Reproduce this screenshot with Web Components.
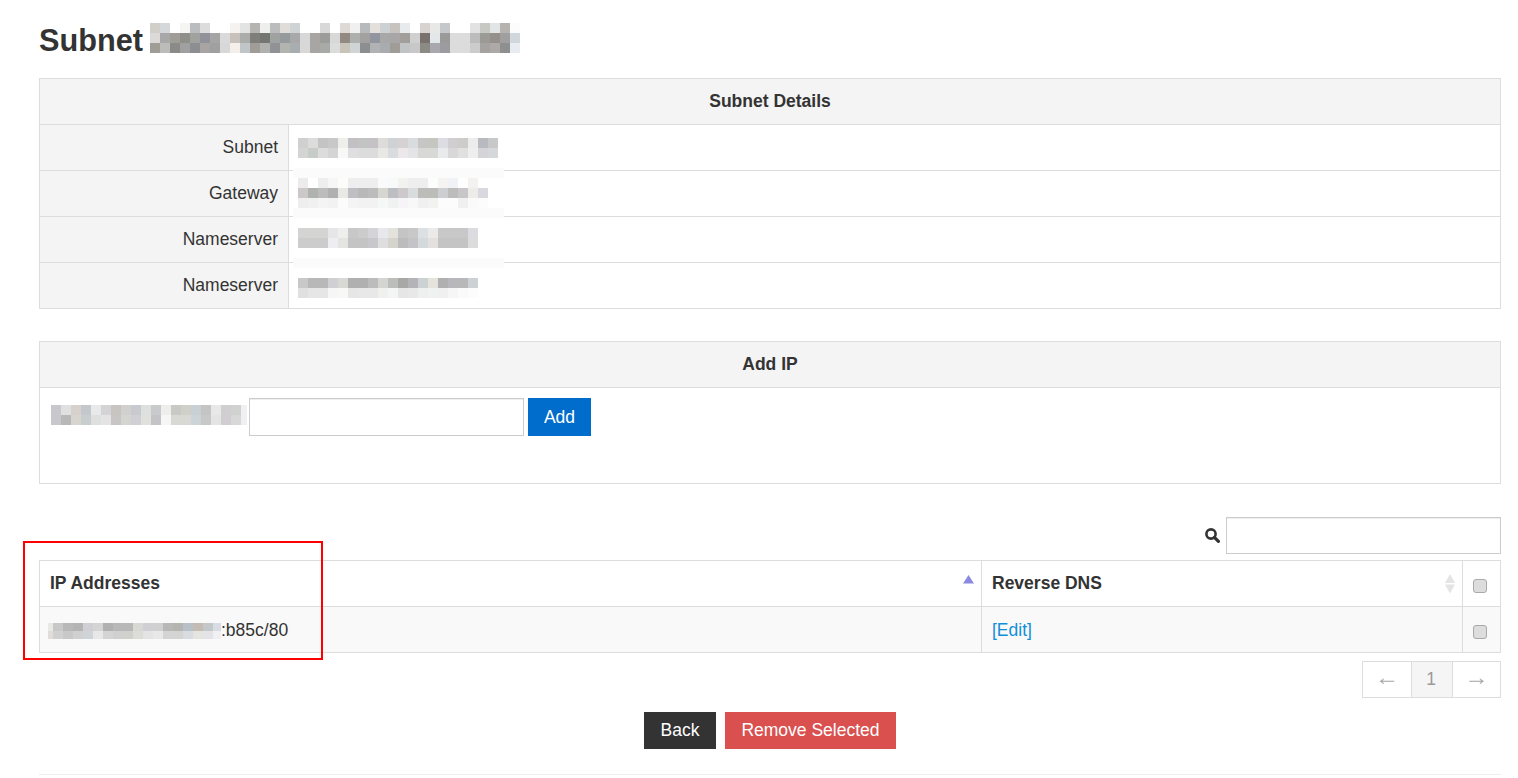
<!DOCTYPE html>
<html lang="en"><head><meta charset="utf-8"><title>Subnet</title>
<style>
html,body{margin:0;padding:0;background:#fff;overflow:hidden;height:778px}
body{font-family:"Liberation Sans",Arial,sans-serif;font-size:17.5px;color:#333}
</style></head><body>
<subnet-page>
  <page-title>Subnet <pixel-mosaic slot="mask" w="10" h="10" rows="
d2cec9 d4d8db ffffff f5f5f3 bbbcbd dcdcdc ffffff ffffff f6f2ef e2e4e4 b5b4b2 eeeeec bbbcbd e0ddd8 cfd3d6 ffffff ffffff d8d8d8 ffffff ded9d5 f0f0f0 b8b9ba e3dfdb ccd1d4 c8c3bf e8ebed ffffff d8d3d0 e8e8e6 c4c8ca ffffff ffffff e2e2e2 c8c8c2 e2e4e6 b5b3b0 fcfcfc|
dcdad8 a8a8a8 a09c98 8f8f8a a0a2a0 8f9298 a5a5a5 dadada c8c0ba aaadaa 807e7a 747672 a0a2a2 959a9d a8a8a8 d8d8d8 a8a5a2 9c9c9a d8d8d8 928a82 aeb0b0 a3a0a0 9095a0 a8a8a8 a8a6a6 a29e9c d0d0d0 7a706c e2e8ea 9a9a98 dcdcdc dcdcdc bcbcbc 9c9a94 96908c a09e9e d0d8de|
a09c96 bcbcba 8a8a88 a0a0a0 8c8e92 a8a4a4 a0a0a0 d8d8d8 f5efec c0c6c8 a09c98 b0b0ae 909296 b2b4b0 a8aeb0 d8d8d8 a8a6a4 a8aaa8 dcdcdc c8c4ba d0d4d4 8c8e90 b0b2b4 a8acae a09c98 c0c4c4 c8c8c8 8c8a84 a8a8ae 9c9ca0 dcdcdc dcdcdc cccccc a6a2a0 aea8a8 8e9090 e8ecf0"></pixel-mosaic></page-title>

  <detail-panel heading="Subnet Details">
    <detail-row label="Subnet"><pixel-mosaic style="margin-top:13px" w="10" h="10" rows="
d0d0d0 dcdcdc c4c4c4 c8c8c8 eeeeea c2c0c2 c2c4c4 c4c2c4 dedcda ced2d4 d6d2d4 d8dcde c6c6c4 c6c6c0 dcdce2 d0ced0 ccccca ececec b8bac0 c8c8c8|
d4d4d4 c8ccc8 dcdcdc d4d4d4 f8f8f6 e0dee0 dcdcdc dcdcdc e8e8e4 d8dcde ece8ea e4e4e6 d8d8d6 d8d8d6 e8eaec d8d8d8 e0e0e0 eeeeee d4d4d8 d4d8da"></pixel-mosaic></detail-row>
    <detail-row label="Gateway"><mask-band style="top:-3px"></mask-band><mask-band style="top:37px"></mask-band><pixel-mosaic style="margin-top:7px" w="10" h="10" rows="
ececec ffffff eeeeee f6f6f6 fcfcfa eeeeee eeeeee eeeeee f8fafc f8fafa f2f2ee eeeeee eeeeee fcfefe f6f4f2 f0f2f6 fefefe f4f2f0 ffffff|
ccc8c8 b0b2b0 bcbcbc b0b0b0 e8e8e4 c0bec2 b8b8b8 bcbcbc d8d6d0 bcbec2 ccc8cc d8dcdc bcbcb8 bcbcb8 ccced2 bcbcbc c8c6c8 eeece8 d8d8de|
eeeeee f0f0f0 f4f4f4 f2f2f2 fcfcfc f4f4f4 f2f2f2 f2f2f2 f6f8f8 f0f2f2 f6f4f6 f8f8f8 f0f0f0 f2f2f0 fcfcfc fcfcfc f0f0f0 fafafa fcfcfc"></pixel-mosaic></detail-row>
    <detail-row label="Nameserver"><mask-band style="top:41px"></mask-band><pixel-mosaic style="margin-top:11px" w="10" h="10" rows="
d4d4d4 d4d4d2 d4d4d2 e6e6e8 eeeeec c8c8c8 cccccc d4d4d8 e6e8ec e4e2dc c4c4c4 c8c8c8 dce0e2 eceae8 c8c8c8 c8c8c8 c8c8c8 dcdce0|
cccccc cccccc cccccc eeeef2 e4e4e2 c4c4c4 c4c4c4 c8c8cc dedede d4d4cc bcbcbc c4c4c8 d4dadc e4e0e0 c4c4c4 c4c4c4 c4c4c4 dcdcdc"></pixel-mosaic></detail-row>
    <detail-row label="Nameserver"><pixel-mosaic style="margin-top:15px" w="10" h="10" rows="
c8c8c8 b8b8b8 b8b8b8 d0d0d4 d8d8d4 b0b0b0 b0b0b0 bcbcbc d4d4d0 bcbebc a8a8a6 b4b4b8 ccd2d4 e6e2dc b0b0b0 b8b8bc b8b8b8 ccd2d4|
e0e0e0 e6e6e6 e6e6e6 f6f6f6 f8f8f6 e6e6e6 e8e8e8 e8e8e8 f0f0ee f4f6f6 e6e6e6 e8e8e8 eef0f0 f0f2f2 f0f0f0 f6f6f6 fafafa fcfcfc"></pixel-mosaic></detail-row>
  </detail-panel>

  <detail-panel heading="Add IP" style="margin-top:32px">
    <add-ip-form><pixel-mosaic slot="mask" cols="repeat(19,10px) 6px" w="10" h="10" rows="
c8c8cc e0e0e0 d8d0cc c4c8cc e8eaea d4d4d6 c8c4c0 d0d0ce c8cad0 dce0de c8cacc eeeeec c8c8c4 d0d0c8 c8d0d4 c4c4c4 e8e8e8 d0ced0 d0d2d0 f0f0f2|
c8c8cc b8b8b8 d8d4d0 c8cece dee0e0 e4e4e4 c8c6c4 d4d4d0 d0d0d4 e0e0dc c4c4c8 f6f6f6 d8d8d4 d8d8d4 ccd4d8 c8c8c8 e4e4e4 d0ced0 d8d8d8 f0f0f2"></pixel-mosaic></add-ip-form>
  </detail-panel>

  <table-search></table-search>

  <ip-table>
    <ip-row head>
      <ip-cell sort="asc" head>IP Addresses</ip-cell>
      <ip-cell sort="both" head>Reverse DNS</ip-cell>
      <ip-cell check></ip-cell>
    </ip-row>
    <ip-row odd>
      <ip-cell><pixel-mosaic cols="5px repeat(16,10px) 8px" w="10" h="8" style="margin:16px 0 0 -2px" rows="
e8e8e4 c8c8c8 b8b8b8 b4b4b4 d0d0d4 d4d4d4 b0b0b0 b8b8b8 b8b8b8 d8d8d4 d0d0d4 d0d0d0 b8b8b8 b4b4b0 b8c0c8 c4bcb4 c4c8c8 d8dce4|
e0dcd8 d0d0d0 c8c8c8 d0d0d0 d0d4d8 e8e8e8 d4d4d4 d0d0d0 d0d0cc dcdcd8 e4e4e4 e8e8e8 d4d4d4 d4d4d4 d8dce0 e4e4e0 e4e4e8 f0f0f4"></pixel-mosaic>:b85c/80</ip-cell>
      <ip-cell><a href="#" style="color:#0f8fd8;text-decoration:none">[Edit]</a></ip-cell>
      <ip-cell check></ip-cell>
    </ip-row>
  </ip-table>

  <page-nav></page-nav>

  <action-bar>
    <action-button style="--bg:#333;--w:72px">Back</action-button>
    <action-button style="--bg:#d9504e;--w:171px">Remove Selected</action-button>
  </action-bar>

  <red-callout></red-callout>
</subnet-page>

<script>
const def=(name,css,html)=>{
  customElements.define(name,class extends HTMLElement{
    constructor(){super();const r=this.attachShadow({mode:'open'});
      r.innerHTML=`<style>${css}</style>${typeof html==='function'?html(this):html}`;}
  });
};
def('subnet-page',`:host{display:block;position:relative;width:1462px;height:778px;padding-left:39px}
  .hr{border-top:1px solid #eee;margin-top:25px}`,`<slot></slot><div class="hr"></div>`);
def('page-title',`:host{display:flex;align-items:flex-start;height:78px;box-sizing:border-box;padding-top:24px;font-size:30.7px;font-weight:bold;line-height:34px;color:#333}
  slot[name=mask]{display:block;margin:-1px 0 0 7px}`,`<slot></slot><slot name="mask"></slot>`);
customElements.define('pixel-mosaic',class extends HTMLElement{
  constructor(){super();this.attachShadow({mode:'open'});}
  connectedCallback(){
    const w=+this.getAttribute('w')||10,h=+this.getAttribute('h')||10;
    const rows=this.getAttribute('rows').trim().split('|').map(r=>r.trim().split(/\s+/));
    const cols=this.getAttribute('cols')||`repeat(${rows[0].length},${w}px)`;
    this.shadowRoot.innerHTML=`<style>:host{display:inline-grid;grid-template-columns:${cols};grid-auto-rows:${h}px;flex:none;vertical-align:top}</style>`+
      rows.flat().map(c=>`<div style="background:#${c}"></div>`).join('');
  }
});
def('detail-panel',`:host{display:block;border:1px solid #ddd}
  .h{height:45px;background:#f4f4f4;display:flex;align-items:center;justify-content:center;font-weight:bold}`,
  el=>`<div class="h">${el.getAttribute('heading')}</div><slot></slot>`);
def('detail-row',`:host{display:flex;border-top:1px solid #ddd;height:45px}
  .l{width:238px;padding-right:10px;background:#f4f4f4;border-right:1px solid #ddd;text-align:right;line-height:45px}
  .v{flex:1;position:relative;padding-left:9px;display:flex;align-items:flex-start}`,
  el=>`<div class="l">${el.getAttribute('label')}</div><div class="v"><slot></slot></div>`);
def('mask-band',`:host{display:block;position:absolute;left:4px;width:211px;height:10px;background:#fbfbfb;z-index:1}`,``);
def('add-ip-form',`:host{display:flex;align-items:flex-start;border-top:1px solid #ddd;height:96px;padding:10px 0 0 11px;box-sizing:border-box}
  slot{display:block;margin-top:7px}
  input{width:275px;height:38px;box-sizing:border-box;border:1px solid #ccc;box-shadow:inset 0 1px 1px rgba(0,0,0,.075);font:inherit;margin:0 0 0 2px;padding:0 8px;outline:none}
  button{height:38px;width:63px;margin-left:4px;background:#006dcc;color:#fff;border:0;font:inherit;padding:0}`,
  `<slot name="mask"></slot><input type="text" aria-label="IP"><button>Add</button>`);
def('table-search',`:host{display:flex;justify-content:flex-end;align-items:center;margin-top:33px;height:37px;gap:6px}
  input{width:275px;height:37px;box-sizing:border-box;border:1px solid #ccc;box-shadow:inset 0 1px 1px rgba(0,0,0,.075);outline:none;padding:0 8px}
  svg{display:block}`,
  `<svg width="15" height="15" viewBox="0 0 15 15"><circle cx="6" cy="6" r="4.6" fill="none" stroke="#333" stroke-width="2.6"/><path d="M9.4 9.4 13.4 13.4" stroke="#333" stroke-width="3.2" stroke-linecap="round"/></svg><input type="text" aria-label="Search">`);
def('ip-table',`:host{display:block;border:1px solid #ddd;margin-top:6px}`,`<slot></slot>`);
def('ip-row',`:host{display:grid;grid-template-columns:941px 481px 1fr;height:45px;--lh:44px}
  :host([odd]){background:#f9f9f9;border-top:1px solid #ddd;--lh:46px}`,`<slot></slot>`);
def('ip-cell',`:host{display:block;position:relative;padding:0 10px;line-height:var(--lh);white-space:nowrap;box-sizing:border-box;height:100%}
  :host(:not(:first-child)){border-left:1px solid #ddd}
  :host([head]){font-weight:bold}
  svg{position:absolute;top:13px}
  .cb{position:absolute;left:10px;top:18px;width:14px;height:14px;box-sizing:border-box;background:#ddd;border:1px solid #aaa;border-radius:3px;margin:0;appearance:none;-webkit-appearance:none}`,
  el=>{
    const s=el.getAttribute('sort');
    let icon='';
    if(s==='asc')icon=`<svg style="right:7px" width="11" height="10" viewBox="0 0 11 10"><path d="M5.5 1 11 9.5H0Z" fill="#8a8ae2"/></svg>`;
    if(s==='both')icon=`<svg style="right:7px" width="10" height="20" viewBox="0 0 10 20"><path d="M5 0 10 9H0ZM0 10.5H10L5 19.5Z" fill="#e4e4e4"/></svg>`;
    if(el.hasAttribute('check'))return `<input class="cb" type="checkbox" aria-label="Select">`;
    return `<slot></slot>${icon}`;
  });
def('page-nav',`:host{display:flex;justify-content:flex-end;margin-top:8px;height:37px}
  .p{display:flex;border:1px solid #ddd;height:37px;box-sizing:border-box;color:#999}
  .p span{display:flex;align-items:center;justify-content:center;height:100%}
  .a,.b{font-size:24px;color:#aaa;box-sizing:border-box;padding-bottom:6px}
  .a{width:48px}.n{width:38px;padding-right:2px;background:#f5f5f5;border-left:1px solid #ddd;border-right:1px solid #ddd}
  .b{width:47px}`,
  `<div class="p"><span class="a">←</span><span class="n">1</span><span class="b">→</span></div>`);
def('action-bar',`:host{display:flex;justify-content:center;gap:9px;margin-top:14px}`,`<slot></slot>`);
def('action-button',`:host{display:block;height:37px;line-height:37px;width:var(--w);text-align:center;background:var(--bg);color:#fff;cursor:pointer}`,`<slot></slot>`);
def('red-callout',`:host{position:absolute;left:23px;top:541px;width:300px;height:119px;box-sizing:border-box;border:2px solid #f00;pointer-events:none}`,``);
</script>
</body></html>
